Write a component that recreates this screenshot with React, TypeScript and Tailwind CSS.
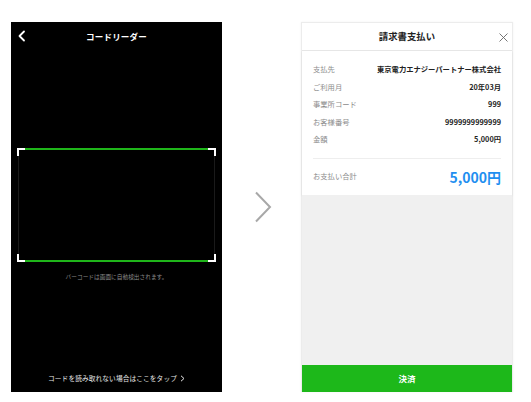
import React from "react";

const font = { fontFamily: '"Noto Sans CJK JP", "Noto Sans", sans-serif' };

function Corner({ pos }: { pos: string }) {
  return <div className={`absolute w-[8px] h-[8px] border-white ${pos}`} />;
}

export default function App() {
  const rows: [string, string][] = [
    ["支払先", "東京電力エナジーパートナー株式会社"],
    ["ご利用月", "20年03月"],
    ["事業所コード", "999"],
    ["お客様番号", "9999999999999"],
    ["金額", "5,000円"],
  ];
  return (
    <div className="w-[531px] h-[402px] bg-white flex pt-[22px] pl-[11px]" style={font}>
      {/* Left phone */}
      <div className="w-[211px] h-[370px] bg-black flex flex-col">
        <div className="h-[28px] relative flex items-center justify-center">
          <svg className="absolute left-[6px] top-[8px]" width="10" height="12" viewBox="0 0 10 12">
            <path d="M7 1.5 L2.5 6 L7 10.5" stroke="white" strokeWidth="1.8" fill="none" strokeLinecap="round" strokeLinejoin="round" />
          </svg>
          <span className="text-white text-[8.5px] font-bold tracking-[0.2px] leading-none">コードリーダー</span>
        </div>
        <div className="relative ml-[7px] mt-[98px] w-[197px] h-[114px] border-y-[2px] border-[#1fb51a]">
          <div className="absolute inset-x-0 -inset-y-[2px] border-x border-[#1a1a1a]" />
          <Corner pos="-left-[1px] -top-[2px] border-l-[2px] border-t-[2px]" />
          <Corner pos="-right-[1px] -top-[2px] border-r-[2px] border-t-[2px]" />
          <Corner pos="-left-[1px] -bottom-[2px] border-l-[2px] border-b-[2px]" />
          <Corner pos="-right-[1px] -bottom-[2px] border-r-[2px] border-b-[2px]" />
        </div>
        <div className="mt-[12px] text-center text-[5.7px] leading-none text-[#8a8a8a]">
          バーコードは画面に自動検出されます。
        </div>
        <div className="flex-1" />
        <div className="pb-[10px] flex items-center justify-center gap-[3px] text-[#e6e6e6] text-[6.7px] leading-none tracking-[0.1px]">
          <span>コードを読み取れない場合はここをタップ</span>
          <svg width="5" height="7" viewBox="0 0 5 7">
            <path d="M1 0.8 L4 3.5 L1 6.2" stroke="#e6e6e6" strokeWidth="1" fill="none" />
          </svg>
        </div>
      </div>

      {/* Arrow */}
      <div className="w-[79px] h-[370px] flex items-center justify-center">
        <svg width="20" height="32" viewBox="0 0 20 32" className="ml-[2px]">
          <path d="M3 1.5 L17 16 L3 30.5" stroke="#a8a8a8" strokeWidth="2" fill="none" />
        </svg>
      </div>

      {/* Right phone */}
      <div className="w-[212px] h-[370px] flex flex-col border border-[#ececec] border-b-0 shadow-[0_0_2px_rgba(0,0,0,0.06)]">
        <div className="h-[28px] relative flex items-center justify-center border-b border-[#e6e6e6] bg-white">
          <span className="text-[#222] text-[9.4px] font-bold leading-none">請求書支払い</span>
          <svg className="absolute right-[4px] top-[10px]" width="9" height="9" viewBox="0 0 9 9">
            <path d="M0.5 0.5 L8.5 8.5 M8.5 0.5 L0.5 8.5" stroke="#666" strokeWidth="0.9" />
          </svg>
        </div>
        <div className="bg-white px-[11px] pt-[10px] shadow-[0_1px_2px_rgba(0,0,0,0.08)]">
          {rows.map(([k, v]) => (
            <div key={k} className="h-[17.5px] flex items-center justify-between leading-none">
              <span className="text-[7.3px] text-[#8c8c8c]">{k}</span>
              <span className="text-[7.3px] font-bold text-[#222]">{v}</span>
            </div>
          ))}
          <div className="mt-[9.5px] border-t border-[#eeeeee]" />
          <div className="h-[36px] flex items-center justify-between leading-none">
            <span className="text-[7.3px] text-[#8c8c8c]">お支払い合計</span>
            <span className="text-[14px] font-bold text-[#1f8ff0]">5,000円</span>
          </div>
        </div>
        <div className="flex-1 bg-[#f0f0f0]" />
        <div className="h-[27px] bg-[#1db81a] flex items-center justify-center">
          <span className="text-white text-[8.5px] font-bold leading-none">決済</span>
        </div>
      </div>
    </div>
  );
}
